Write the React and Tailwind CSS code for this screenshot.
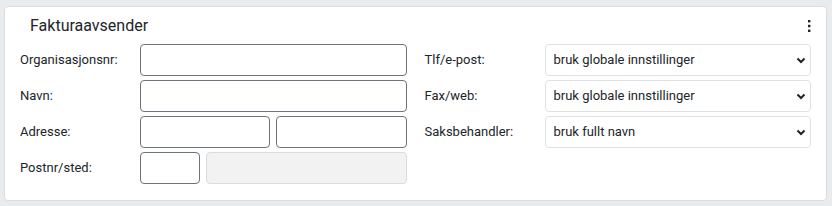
import React from 'react';

function Field({ label, children }) {
  return (
    <div className="flex items-center h-8">
      <label className="w-[120px] shrink-0 text-[13px] text-[#212529]">{label}</label>
      <div className="flex-1 flex gap-[6px] h-full">{children}</div>
    </div>
  );
}

function Input({ className = '', disabled }) {
  return (
    <input
      disabled={disabled}
      className={
        'h-full rounded-[4px] border outline-none ' +
        (disabled ? 'bg-[#f2f2f2] border-[#dcdcdc] ' : 'bg-white border-[#6c757d] ') +
        className
      }
    />
  );
}

function Select({ value }) {
  return (
    <div className="relative flex-1 h-full">
      <select
        defaultValue={value}
        className="appearance-none w-full h-full rounded-[4px] border border-[#dee2e6] bg-white pl-2 text-[13px] text-[#212529] outline-none"
      >
        <option>{value}</option>
      </select>
      <svg
        className="absolute right-[5px] top-1/2 -translate-y-1/2 pointer-events-none"
        width="10"
        height="8"
        viewBox="0 0 10 8"
      >
        <path d="M1.5 2.5 L5 6 L8.5 2.5" fill="none" stroke="#212529" strokeWidth="2" />
      </svg>
    </div>
  );
}

export default function App() {
  return (
    <div className="bg-[#e9ecef] min-h-[206px] pt-[6px] pl-[4px] pr-[5px] pb-[6px]" style={{ fontFamily: 'Roboto, "Liberation Sans", sans-serif' }}>
      <div className="bg-white border border-[#dadde0] rounded-[4px] px-[15px] pb-4">
        <div className="flex items-center justify-between h-[37px]">
          <h2 className="pl-[10px] text-[16px] text-[#212529] pt-[1px]">Fakturaavsender</h2>
          <svg width="4" height="14" viewBox="0 0 4 14">
            <rect x="1" y="1" width="2.4" height="2.4" fill="#212529" />
            <rect x="1" y="5.8" width="2.4" height="2.4" fill="#212529" />
            <rect x="1" y="10.6" width="2.4" height="2.4" fill="#212529" />
          </svg>
        </div>
        <div className="grid grid-cols-2 gap-x-[18px]">
          <div className="flex flex-col gap-1">
            <Field label="Organisasjonsnr:">
              <Input className="flex-1 w-full" />
            </Field>
            <Field label="Navn:">
              <Input className="flex-1 w-full" />
            </Field>
            <Field label="Adresse:">
              <Input className="flex-1 w-0" />
              <Input className="flex-1 w-0" />
            </Field>
            <Field label="Postnr/sted:">
              <Input className="w-[60px]" />
              <Input className="flex-1 w-0" disabled />
            </Field>
          </div>
          <div className="flex flex-col gap-1">
            <Field label="Tlf/e-post:">
              <Select value="bruk globale innstillinger" />
            </Field>
            <Field label="Fax/web:">
              <Select value="bruk globale innstillinger" />
            </Field>
            <Field label="Saksbehandler:">
              <Select value="bruk fullt navn" />
            </Field>
          </div>
        </div>
      </div>
    </div>
  );
}
